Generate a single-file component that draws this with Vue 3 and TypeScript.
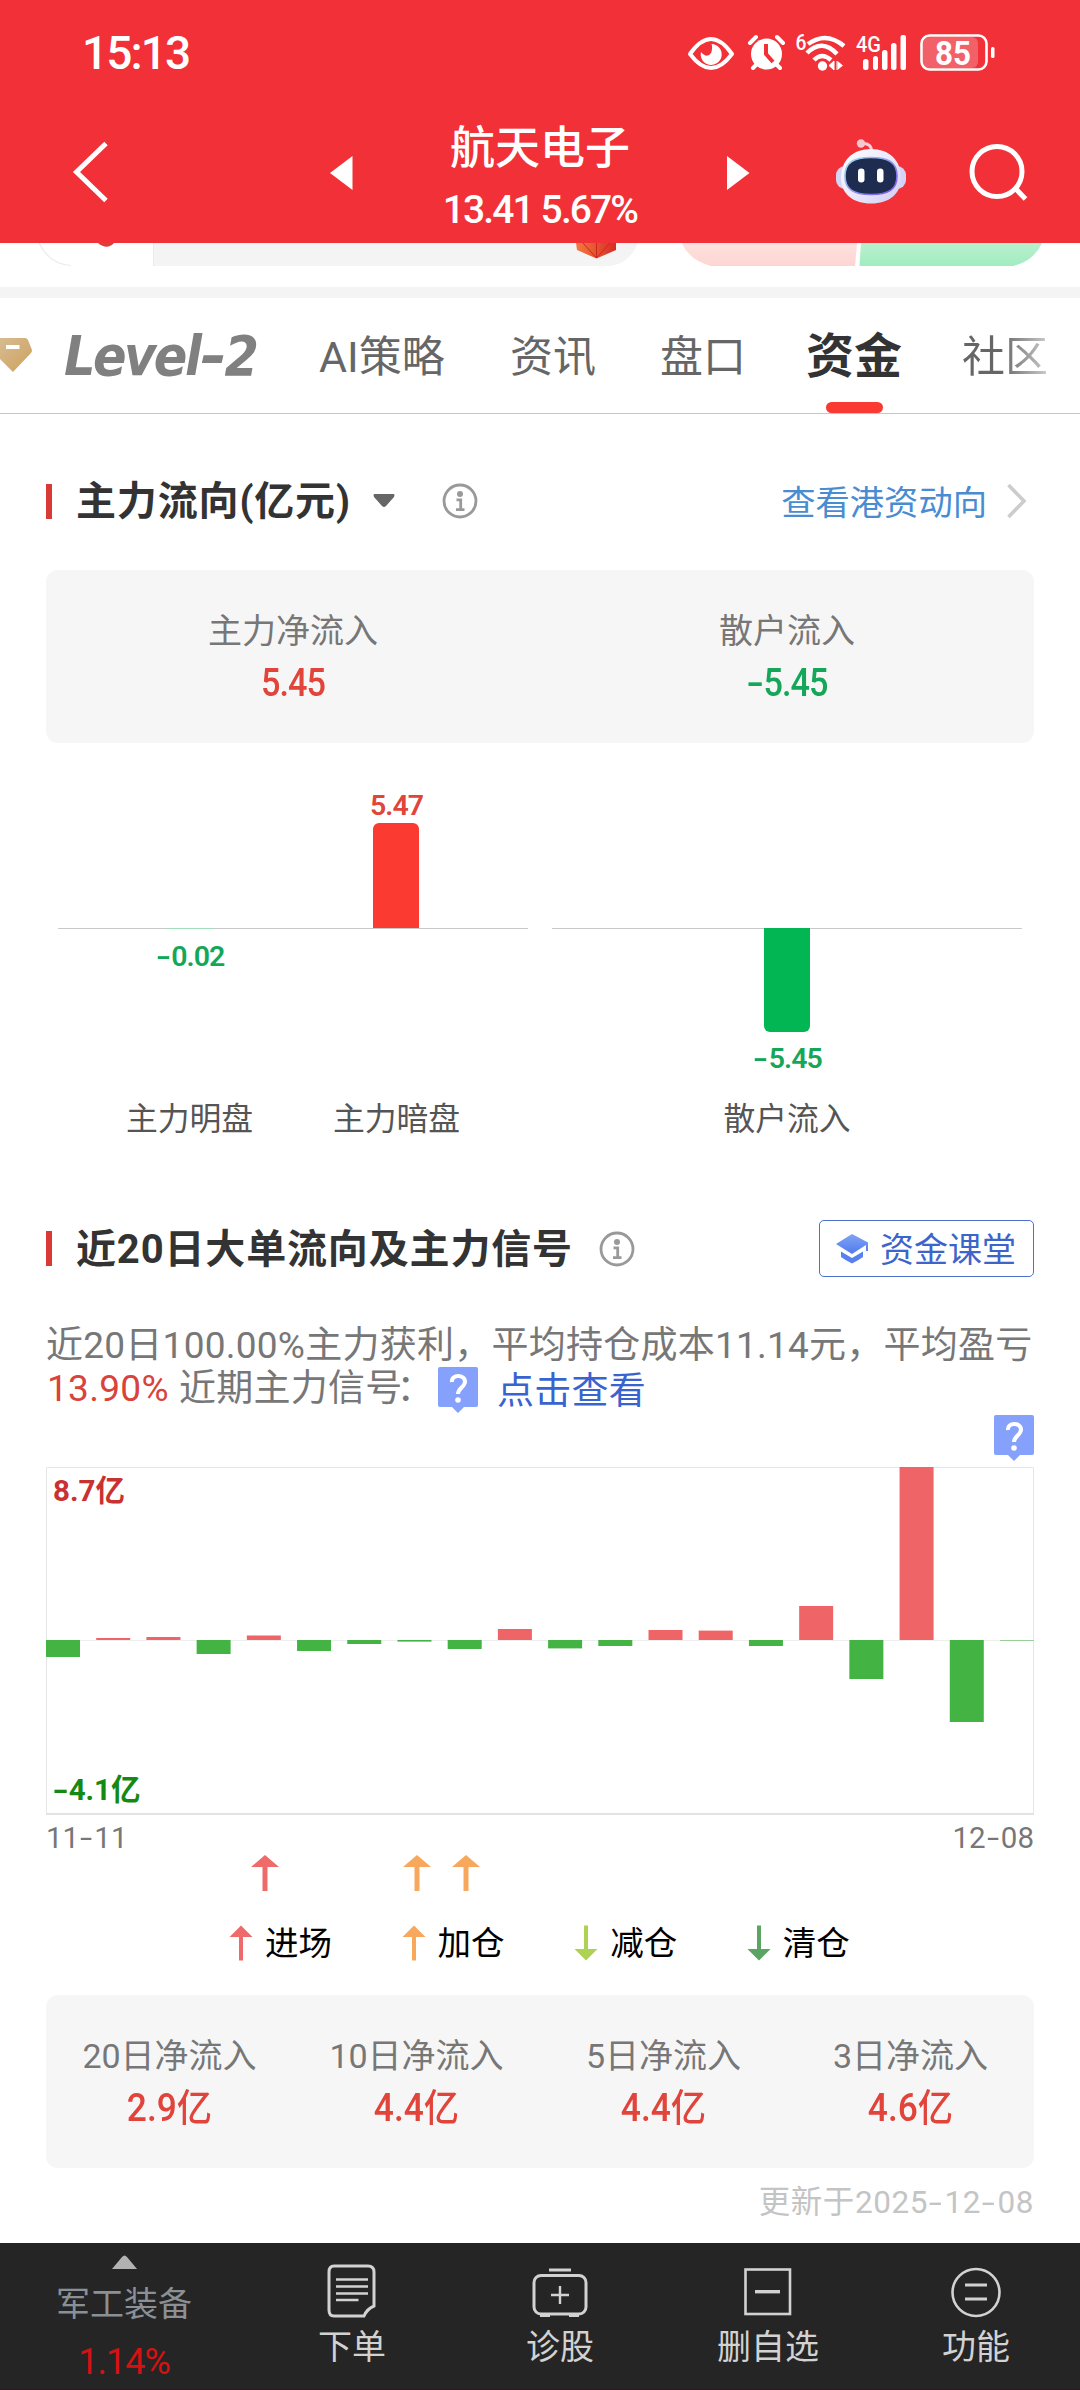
<script setup lang="ts">
interface Tab { label: string; kind: string }
interface Stat { label: string; value: string }

const tabs: Tab[] = [
  { label: 'AI策略', kind: 'ai' },
  { label: '资讯', kind: 'news' },
  { label: '盘口', kind: 'board' },
  { label: '资金', kind: 'active' },
  { label: '社区', kind: 'fade' },
]

// Bar extents in pixels relative to the zero line; positive is inflow.
const flows: number[] = [
  -17, 2, 3, -14, 4.5, -11, -4, -1.6, -9, 11,
  -8.4, -6, 10, 9.4, -6, 34, -39, 173, -82, -0.5,
]

const stats: Stat[] = [
  { label: '20日净流入', value: '2.9亿' },
  { label: '10日净流入', value: '4.4亿' },
  { label: '5日净流入', value: '4.4亿' },
  { label: '3日净流入', value: '4.6亿' },
]

const legend = [
  { label: '进场', color: '#ef6b6b', down: false },
  { label: '加仓', color: '#f8a85c', down: false },
  { label: '减仓', color: '#aed253', down: true },
  { label: '清仓', color: '#5aa564', down: true },
]

const signals = [
  { x: 219, color: '#ef6b6b' },
  { x: 371, color: '#f8a85c' },
  { x: 420, color: '#f8a85c' },
]
</script>

<template>
  <div class="page">
    <header class="header">
      <div class="status">
        <span class="clock">15:13</span>
        <svg class="status-icons" width="310" height="54" viewBox="686 22 310 54">
          <path d="M690 54Q711 24 732 54Q711 82 690 54Z" fill="none" stroke="#fff" stroke-width="4" stroke-linejoin="round" />
          <path d="M711.500 44A10.500 10.500 0 1 1 701 52Q707 59 711 53Q713 48 711.500 44Z" fill="#fff" />
          <circle cx="766.500" cy="54" r="15.500" fill="#fff" />
          <path d="M750 43L756 37M783 43L777 37M753 68L757 64M780 68L776 64" stroke="#fff" stroke-width="4" stroke-linecap="round" />
          <path d="M766 44V54L773 62" fill="none" stroke="#f23037" stroke-width="4" />
          <text x="795.500" y="50" class="tiny" textLength="11" lengthAdjust="spacingAndGlyphs">6</text>
          <g fill="none" stroke="#fff" stroke-width="4.400">
            <path d="M808 44Q826 31 844 46" />
            <path d="M807 53Q822 38 837 54" />
            <path d="M814 60Q822 52 831 60" />
          </g>
          <circle cx="822.500" cy="66" r="4.700" fill="#fff" />
          <path d="M834 61V70L829 65.500ZM837 61V70" fill="#fff" stroke="#fff" stroke-width="1" />
          <path d="M837.500 61L843 65.500L837.500 70Z" fill="#fff" />
          <text x="856" y="52" class="tiny" textLength="25" lengthAdjust="spacingAndGlyphs">4G</text>
          <g fill="#fff">
            <rect x="863" y="59" width="5.500" height="11" rx="2.500" />
            <rect x="873" y="56" width="5" height="14" rx="2.500" />
            <rect x="882" y="50" width="5.500" height="20" rx="2.500" />
            <rect x="891" y="43" width="5.500" height="27" rx="2.500" />
            <rect x="900.500" y="35" width="5.500" height="35" rx="2" />
          </g>
          <rect x="923" y="37" width="55" height="31" rx="6" fill="#f26068" />
          <rect x="921.500" y="35.500" width="65" height="34" rx="8" fill="none" stroke="#fff" stroke-width="2.600" />
          <rect x="991" y="47" width="3.500" height="11" rx="1.500" fill="#fff" />
          <text x="935" y="65" class="batt" textLength="36" lengthAdjust="spacingAndGlyphs">85</text>
        </svg>
      </div>
      <div class="nav">
        <svg class="back" width="40" height="64" viewBox="0 0 40 64">
          <path d="M35 3.500L5.500 32L35 60.500" fill="none" stroke="#fff" stroke-width="5" />
        </svg>
        <svg class="prev" width="23" height="34" viewBox="0 0 23 34"><path d="M0 17L22.500 0V34Z" fill="#fff" /></svg>
        <div class="stock">
          <div class="stock-name">航天电子</div>
          <div class="stock-price">13.41 5.67%</div>
        </div>
        <svg class="next" width="23" height="34" viewBox="0 0 23 34"><path d="M22.500 17L0 0V34Z" fill="#fff" /></svg>
        <svg class="bot" width="70" height="66" viewBox="0 0 70 66">
          <defs>
            <linearGradient id="shell" x1="0" y1="0" x2="1" y2="1">
              <stop offset="0" stop-color="#ffffff" /><stop offset=".55" stop-color="#e9e6fb" /><stop offset="1" stop-color="#cfcdf2" />
            </linearGradient>
            <linearGradient id="rim" x1="0" y1="0" x2="1" y2="1">
              <stop offset="0" stop-color="#9fe0f4" /><stop offset="1" stop-color="#7a4fe0" />
            </linearGradient>
          </defs>
          <path d="M26 4.500Q36 4 35.500 13" fill="none" stroke="#f6cdd8" stroke-width="3" />
          <circle cx="25" cy="4.500" r="4.200" fill="#f8c6cf" />
          <rect x="0" y="27" width="70" height="23" rx="9" fill="#d5d4f6" />
          <path d="M35 10C53 10 65 21 65 39C65 55 53 64.500 35 64.500C17 64.500 5 55 5 39C5 21 17 10 35 10Z" fill="url(#shell)" />
          <path d="M35 18.500C52 18.500 61 23 61 37C61 50 53 55.500 35 55.500C17 55.500 9 50 9 37C9 23 18 18.500 35 18.500Z" fill="#1e2c50" stroke="url(#rim)" stroke-width="1.600" />
          <rect x="22" y="29.500" width="6.500" height="14" rx="3.200" fill="#fff" />
          <rect x="41" y="29.500" width="6.500" height="14" rx="3.200" fill="#fff" />
        </svg>
        <svg class="search" width="60" height="60" viewBox="0 0 60 60">
          <circle cx="28" cy="28.500" r="25" fill="none" stroke="#fff" stroke-width="5" />
          <path d="M46 45L56.500 56" stroke="#fff" stroke-width="5" />
        </svg>
      </div>
    </header>

    <svg class="strip" width="1080" height="24" viewBox="0 0 1080 24">
      <defs>
        <linearGradient id="pinkFade" x1="0" y1="0" x2="0" y2="1"><stop offset="0" stop-color="#fde1de" /><stop offset="1" stop-color="#fdd6d2" /></linearGradient>
        <linearGradient id="greenFade" x1="0" y1="0" x2="0" y2="1"><stop offset="0" stop-color="#b8f1cf" /><stop offset="1" stop-color="#a2ecc0" /></linearGradient>
        <linearGradient id="gem" x1="0" y1="0" x2="1" y2="0"><stop offset="0" stop-color="#f47a3e" /><stop offset="1" stop-color="#d92a25" /></linearGradient>
      </defs>
      <path d="M39 0Q49 21 71 22.500" fill="none" stroke="#ececec" stroke-width="1.200" />
      <path d="M98 0H114Q107 7.500 98 0Z" fill="#d9403a" />
      <path d="M153 0H638Q630 20 611 23H153Z" fill="#f4f4f4" />
      <path d="M153.500 0V23" stroke="#ebebeb" />
      <path d="M576 0H616V7L596.500 15.500L577 7Z" fill="url(#gem)" />
      <path d="M583 0L596.500 15L610 0M596.500 0V15" fill="none" stroke="#c9281f" stroke-width="1" />
      <path d="M682 0H857L855 23H711Q689 17 682 0Z" fill="url(#pinkFade)" />
      <path d="M861 0H1042Q1034 18 1013 23H859.500Z" fill="url(#greenFade)" />
    </svg>
    <div class="band"></div>

    <nav class="tabs">
      <svg class="gem" width="33" height="36" viewBox="0 0 33 36">
        <defs><linearGradient id="gold" x1="0" y1="0" x2="1" y2="1"><stop offset="0" stop-color="#d6bc92" /><stop offset="1" stop-color="#cfa05c" /></linearGradient></defs>
        <path d="M0 1H25Q27 1 28 3L32 13Q32 15 31 16L13 35L0 22Z" fill="url(#gold)" />
        <path d="M6 10H19.500" stroke="#fff" stroke-width="4" />
      </svg>
      <span class="level">Level<b class="dash">-</b>2</span>
      <span v-for="t in tabs" :key="t.label" class="tab" :class="t.kind">{{ t.label }}</span>
    </nav>

    <section class="flow">
      <div class="head">
        <i class="mark"></i>
        <h2>主力流向(亿元)</h2>
        <svg class="caret" width="22" height="14" viewBox="0 0 22 14"><path d="M1 0H21Q22 1 21 3L13 12Q11 14 9 12L1 3Q0 1 1 0Z" fill="#666" /></svg>
        <svg class="info" width="36" height="36" viewBox="0 0 36 36"><circle cx="18" cy="18" r="16" fill="none" stroke="#999" stroke-width="2.800" /><circle cx="18" cy="11" r="3" fill="#999" /><path d="M14.500 16.800H18.700V26.500M14 26.700H22.500" fill="none" stroke="#999" stroke-width="2.800" /></svg>
        <span class="link">查看港资动向</span>
        <svg class="more" width="22" height="36" viewBox="0 0 22 36"><path d="M2.500 2L18 18L2.500 34" fill="none" stroke="#ccc" stroke-width="3.600" /></svg>
      </div>
      <div class="card">
        <div class="cell"><div class="label">主力净流入</div><div class="value up">5.45</div></div>
        <div class="cell"><div class="label">散户流入</div><div class="value down"><b class="hy">-</b>5.45</div></div>
      </div>
      <div class="bars">
        <div class="panel two">
          <div class="col">
            <div class="above"></div>
            <div class="below"><i class="sliver"></i><span class="num down"><b class="hy">-</b>0.02</span></div>
            <div class="name">主力明盘</div>
          </div>
          <div class="col">
            <div class="above"><span class="num up">5.47</span><i class="bar red"></i></div>
            <div class="below"></div>
            <div class="name">主力暗盘</div>
          </div>
        </div>
        <div class="panel">
          <div class="col">
            <div class="above"></div>
            <div class="below"><i class="bar green"></i><span class="num down"><b class="hy">-</b>5.45</span></div>
            <div class="name">散户流入</div>
          </div>
        </div>
      </div>
    </section>

    <section class="recent">
      <div class="head">
        <i class="mark"></i>
        <h2>近20日大单流向及主力信号</h2>
        <svg class="info" width="36" height="36" viewBox="0 0 36 36"><circle cx="18" cy="18" r="16" fill="none" stroke="#999" stroke-width="2.800" /><circle cx="18" cy="11" r="3" fill="#999" /><path d="M14.500 16.800H18.700V26.500M14 26.700H22.500" fill="none" stroke="#999" stroke-width="2.800" /></svg>
        <span class="lesson">
          <svg width="34" height="32" viewBox="0 0 34 32">
            <defs><linearGradient id="capFill" x1="0" y1="0" x2="0" y2="1"><stop offset="0" stop-color="#82a3f4" /><stop offset="1" stop-color="#4f7bee" /></linearGradient></defs>
            <path d="M16 1L32 9.500V18H30V12L16 21L0 11Z" fill="url(#capFill)" />
            <path d="M5 18.500L16 25L27 18.500V24Q23 27 16 30.500Q9 27 5 24Z" fill="#5881f0" />
          </svg>
          <span class="lesson-text">资金课堂</span>
        </span>
      </div>
      <div class="summary">
        <div class="line">近20日100.00%主力获利，平均持仓成本11.14元，平均盈亏</div>
        <div class="line second">
          <span class="gain">13.90%</span><span class="near">近期主力信号<i class="colon">：</i></span>
          <svg class="help" width="40" height="46" viewBox="0 0 40 46"><path d="M2 0H38Q40 0 40 2V38Q40 40 38 40H26L20 46L14 40H2Q0 40 0 38V2Q0 0 2 0Z" fill="#85a1fb" /><path d="M14 15C13 7 27 7 27 14.500C27 20 20 21 20 27" fill="none" stroke="#fff" stroke-width="4" /><circle cx="20" cy="33" r="2.800" fill="#fff" /></svg>
          <span class="check">点击查看</span>
        </div>
      </div>
      <div class="help-row">
        <svg class="help" width="40" height="46" viewBox="0 0 40 46"><path d="M2 0H38Q40 0 40 2V38Q40 40 38 40H26L20 46L14 40H2Q0 40 0 38V2Q0 0 2 0Z" fill="#85a1fb" /><path d="M14 15C13 7 27 7 27 14.500C27 20 20 21 20 27" fill="none" stroke="#fff" stroke-width="4" /><circle cx="20" cy="33" r="2.800" fill="#fff" /></svg>
      </div>
      <div class="chart">
        <svg width="988" height="348" viewBox="0 0 988 348">
          <path d="M0.500 347V0.500H987.500V347" fill="none" stroke="#e6e6e6" />
          <path d="M0 347H988" stroke="#dadada" stroke-width="1.500" />
          <path d="M0 173.500H988" stroke="#eee" />
          <rect
            v-for="(v, i) in flows" :key="i"
            :x="i * 50.21" :y="v > 0 ? 173 - v : 173" width="34" :height="Math.abs(v)"
            :fill="v > 0 ? '#ef6567' : '#43b343'"
          />
        </svg>
        <span class="max">8.7亿</span>
        <span class="min"><b class="hy">-</b>4.1亿</span>
      </div>
      <div class="dates"><span>11<b class="hy">-</b>11</span><span>12<b class="hy">-</b>08</span></div>
      <svg class="signals" width="988" height="36" viewBox="0 0 988 36">
        <g v-for="s in signals" :key="s.x" :transform="`translate(${s.x} 0)`" :fill="s.color">
          <path d="M0 0L14 12H2.500V36H-2.500V12H-14Z" />
        </g>
      </svg>
      <div class="legend">
        <div v-for="l in legend" :key="l.label" class="legend-item">
          <svg width="24" height="36" viewBox="-12 0 24 36"><path :fill="l.color" :transform="l.down ? 'rotate(180 0 18)' : undefined" d="M0 0.500L11.500 12H2V35.500H-2V12H-11.500Z" /></svg>
          <span>{{ l.label }}</span>
        </div>
      </div>
      <div class="card totals">
        <div v-for="s in stats" :key="s.label" class="cell"><div class="label">{{ s.label }}</div><div class="value up">{{ s.value }}</div></div>
      </div>
      <div class="updated">更新于2025<b class="hy">-</b>12<b class="hy">-</b>08</div>
    </section>

    <footer class="footer">
      <div class="sector">
        <svg width="25" height="14" viewBox="0 0 25 14"><path d="M0 14L10 2Q12.500 -1 15 2L25 14Z" fill="#b2b2b2" /></svg>
        <span class="sector-name">军工装备</span>
        <span class="sector-pct">1.14%</span>
      </div>
      <div class="action">
        <svg width="60" height="56" viewBox="0 0 60 56" fill="none" stroke="#d2d2d2" stroke-width="3">
          <path d="M12 3H46Q52 3 52 9V43Q45 46 42 53H12Q7 53 7 47V9Q7 3 12 3Z" />
          <path d="M14 16.500H46M14 23.500H46M14 30.500H46M14 37H36.500" stroke-width="2.600" />
        </svg>
        <span>下单</span>
      </div>
      <div class="action">
        <svg width="60" height="56" viewBox="0 0 60 56" fill="none" stroke="#d2d2d2" stroke-width="3">
          <rect x="4" y="12.500" width="52" height="38.500" rx="7" />
          <path d="M19 7H41M10 52.500H20M39 52.500H49" stroke-width="2.800" />
          <path d="M30 23V41M21 32H39" stroke-width="2.400" />
        </svg>
        <span>诊股</span>
      </div>
      <div class="action">
        <svg width="60" height="56" viewBox="0 0 60 56" fill="none" stroke="#d2d2d2" stroke-width="2.600">
          <rect x="7.500" y="6.500" width="44.500" height="44.500" /><path d="M17 28.700H42" stroke-width="3.400" />
        </svg>
        <span>删自选</span>
      </div>
      <div class="action">
        <svg width="60" height="56" viewBox="0 0 60 56" fill="none" stroke="#d2d2d2" stroke-width="2.600">
          <circle cx="30" cy="29.500" r="23.500" /><path d="M19 22H41M19 36H41" stroke-width="3" />
        </svg>
        <span>功能</span>
      </div>
    </footer>
  </div>
</template>

<style>
body { background: #fff; }
</style>

<style scoped>
.page { width: 1080px; height: 2390px; overflow: hidden; background: #fff; font-family: Roboto, "Noto Sans CJK SC", sans-serif; display: flex; flex-direction: column; }
.page svg { display: block; flex: none; }
.header { height: 243px; background: #f23037; color: #fff; flex: none; }
.status { height: 106px; display: flex; align-items: flex-start; padding: 22px 84px 0 82px; justify-content: space-between; box-sizing: border-box; }
.clock { font-size: 46px; line-height: 44px; margin-top: 9px; font-weight: 500; letter-spacing: -1.900px; }
.tiny { font-size: 22px; font-weight: 500; fill: #fff; }
.batt { font-size: 34px; font-weight: 700; fill: #fff; }
.nav { display: flex; height: 137px; }
.back { margin: 33.500px 0 0 71px; }
.prev { margin: 50px 0 0 218.500px; }
.stock { width: 375px; text-align: center; }
.stock-name { font-size: 45px; line-height: 50px; margin-top: 18px; font-weight: 500; white-space: nowrap; }
.stock-price { font-size: 39px; line-height: 40px; margin-top: 16px; letter-spacing: -1.900px; font-weight: 500; }
.next { margin: 50px 0 0 -1px; }
.bot { margin: 33px 0 0 86px; }
.search { margin: 37px 0 0 63.500px; }
.band { height: 11px; margin-top: 20px; background: #f4f4f4; flex: none; }
.tabs { height: 115px; border-bottom: 1px solid #c6c6c6; display: flex; flex: none; color: #666; font-size: 43px; line-height: 60px; }
.gem { margin-top: 39px; }
.level { width: 253px; flex: none; margin: 28px 0 0 31px; font-size: 55px; font-weight: 700; font-style: italic; letter-spacing: -2.500px; color: #808080; font-family: "DejaVu Sans Condensed", "DejaVu Sans", sans-serif; font-stretch: condensed; white-space: nowrap; }
.dash { display: inline-block; transform: scaleX(1.300); margin: 0 3px 0 4px; }
.tab { margin-top: 29px; position: relative; white-space: nowrap; flex: none; }
.ai { width: 128px; margin-left: 2px; }
.news { margin-left: 63px; }
.board { margin-left: 64px; }
.active { margin-left: 60px; font-size: 48px; font-weight: 700; color: #333; }
.active::after { content: ""; position: absolute; left: 20px; top: 75px; width: 57px; height: 11px; border-radius: 6px; background: #fa3a32; }
.fade { margin-left: 60px; background: linear-gradient(90deg, #666 45%, #ccc); -webkit-background-clip: text; background-clip: text; color: transparent; }
.flow { padding: 61px 46px 0; height: 814px; box-sizing: border-box; flex: none; }
.head { display: flex; align-items: center; height: 52px; }
.mark { width: 6px; height: 35px; background: #d83a36; }
h2 { margin: 2px 0 0 24px; font-size: 40px; line-height: 52px; color: #333; font-weight: 700; white-space: nowrap; letter-spacing: .850px; }
.caret { margin-left: 22px; }
.info { margin-left: 47px; }
.recent .info { margin-left: 26px; }
.link { margin: -3px 0 0 auto; font-size: 34.300px; color: #4a8cd2; }
.more { margin: 0 6px 0 19px; }
.card { height: 173px; margin-top: 43px; border-radius: 12px; background: #f6f6f6; display: flex; padding-top: 39px; box-sizing: border-box; }
.cell { flex: 1; text-align: center; }
.label { font-size: 34px; line-height: 44px; color: #777; white-space: nowrap; }
.value { font-size: 38px; line-height: 40px; margin-top: 10px; font-weight: 500; letter-spacing: -1px; transform: scaleX(.900); }
.up { color: #e0443a; }
.down { color: #14a75a; }
.hy { display: inline-block; font-weight: inherit; transform: scaleX(1.500); transform-origin: 50% 50%; margin-right: 4px; margin-left: 3px; }
.bars { display: flex; gap: 24px; padding: 0 12px; }
.panel { width: 470px; box-sizing: border-box; flex: none; display: flex; background: linear-gradient(#c8c8c8, #c8c8c8) 0 185px / 100% 1px no-repeat; }
.two { padding: 0 28px; }
.col { flex: 1; display: flex; flex-direction: column; align-items: center; }
.above { height: 185px; display: flex; flex-direction: column; justify-content: flex-end; align-items: center; }
.below { height: 169px; display: flex; flex-direction: column; align-items: center; }
.bar { width: 46px; }
.red { height: 105px; background: #fb3b32; border-radius: 6px 6px 0 0; }
.green { height: 104px; background: #02b653; border-radius: 0 0 6px 6px; }
.sliver { width: 46px; height: 1px; background: #a3dfbf; }
.num { font-size: 28.500px; line-height: 32px; font-weight: 600; letter-spacing: -1px; }
.above .num { margin-bottom: 1px; }
.below .num { margin-top: 11px; }
.sliver + .num { margin-top: 12px; }
.name { font-size: 31.800px; line-height: 44px; color: #555; }
.recent { padding: 0 46px; height: 1015px; box-sizing: border-box; flex: none; }
.recent .head { height: 57px; margin-top: -8px; }
.lesson { margin-left: auto; width: 215px; height: 57px; box-sizing: border-box; border: 1.500px solid #4c70cc; border-radius: 5px; display: flex; align-items: center; gap: 10px; padding-left: 16px; font-size: 34px; color: #3d64cb; white-space: nowrap; }
.lesson-text { margin-top: -3px; }
.summary { margin-top: 46px; color: #777; font-size: 37px; letter-spacing: .250px; white-space: nowrap; }
.line { height: 43px; line-height: 46px; }
.second { display: flex; }
.gain { color: #d8433b; width: 133px; letter-spacing: .300px; padding-left: 1px; box-sizing: border-box; }
.near { width: 259px; }
.colon { font-style: normal; margin-left: -6px; }
.second .help { margin-top: 1px; }
.check { margin: 3px 0 0 19px; color: #3963cf; }
.help-row { height: 58px; padding-top: 6px; display: flex; justify-content: flex-end; box-sizing: border-box; }
.chart { position: relative; height: 348px; }
.max, .min { position: absolute; left: 7px; font-size: 29.500px; line-height: 34px; font-weight: 700; }
.max { top: 7px; color: #c83230; }
.min { bottom: 8px; color: #148914; }
.min .hy { margin: 0 2px 0 2px; }
.dates { display: flex; justify-content: space-between; font-size: 29.500px; line-height: 34px; margin-top: 6px; color: #777; }
.signals { margin-top: 0; }
.legend { display: flex; padding-left: 183px; margin-top: 34px; }
.legend-item { width: 172.600px; display: flex; gap: 12px; font-size: 33.500px; line-height: 38px; color: #000; }
.totals { margin-top: 32px; }
.totals .value { letter-spacing: 0; transform: scaleX(.930); }
.updated { text-align: right; font-size: 31.500px; line-height: 40px; margin-top: 15px; color: #c4c4c4; letter-spacing: .600px; }
.footer { height: 147px; flex: none; background: #252525; border-bottom: 1px solid #2c1820; box-sizing: border-box; display: flex; color: #d2d2d2; }
.sector { width: 248px; display: flex; flex-direction: column; align-items: center; padding-top: 12px; box-sizing: border-box; }
.sector-name { font-size: 34px; line-height: 44px; margin-top: 13px; color: #899096; }
.sector-pct { font-size: 36px; line-height: 40px; margin-top: 16px; color: #d31313; letter-spacing: -1px; }
.action { width: 208px; display: flex; flex-direction: column; align-items: center; padding-top: 20px; box-sizing: border-box; font-size: 34px; line-height: 44px; }
.action span { margin-top: 6px; }
</style>
